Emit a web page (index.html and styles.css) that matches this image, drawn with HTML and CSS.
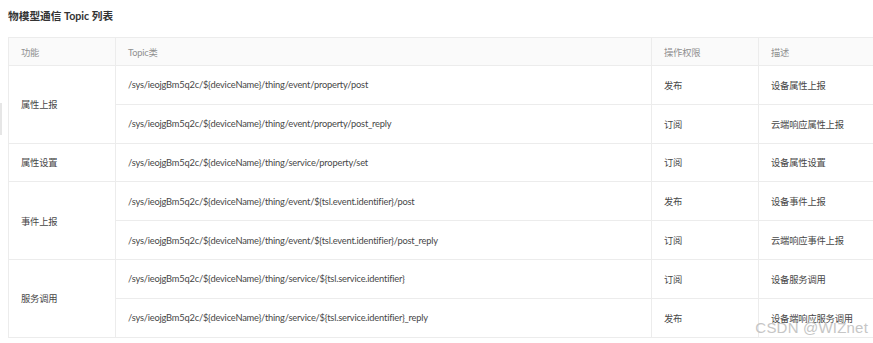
FILE: index.html
```html
<!DOCTYPE html>
<html lang="zh-CN">
<head>
<meta charset="utf-8">
<title>物模型通信 Topic 列表</title>
<link rel="stylesheet" href="styles.css">
</head>
<body>
<div class="page">
  <div class="side-mark"></div>
  <h2 class="title">物模型通信 Topic 列表</h2>
  <table class="topic-table">
    <colgroup>
      <col class="c1"><col class="c2"><col class="c3"><col class="c4">
    </colgroup>
    <thead>
      <tr><th>功能</th><th>Topic类</th><th>操作权限</th><th>描述</th></tr>
    </thead>
    <tbody>
      <tr><td rowspan="2">属性上报</td><td>/sys/ieojgBm5q2c/${deviceName}/thing/event/property/post</td><td>发布</td><td>设备属性上报</td></tr>
      <tr><td>/sys/ieojgBm5q2c/${deviceName}/thing/event/property/post_reply</td><td>订阅</td><td>云端响应属性上报</td></tr>
      <tr><td>属性设置</td><td>/sys/ieojgBm5q2c/${deviceName}/thing/service/property/set</td><td>订阅</td><td>设备属性设置</td></tr>
      <tr><td rowspan="2">事件上报</td><td>/sys/ieojgBm5q2c/${deviceName}/thing/event/${tsl.event.identifier}/post</td><td>发布</td><td>设备事件上报</td></tr>
      <tr><td>/sys/ieojgBm5q2c/${deviceName}/thing/event/${tsl.event.identifier}/post_reply</td><td>订阅</td><td>云端响应事件上报</td></tr>
      <tr><td rowspan="2">服务调用</td><td>/sys/ieojgBm5q2c/${deviceName}/thing/service/${tsl.service.identifier}</td><td>订阅</td><td>设备服务调用</td></tr>
      <tr><td>/sys/ieojgBm5q2c/${deviceName}/thing/service/${tsl.service.identifier}_reply</td><td>发布</td><td>设备端响应服务调用</td></tr>
    </tbody>
  </table>
  <div class="watermark">CSDN @WIZnet</div>
</div>
</body>
</html>
```
FILE: styles.css
```css
html, body {
  margin: 0;
  padding: 0;
  background: #ffffff;
  overflow: hidden;
}
.page {
  position: relative;
  width: 873px;
  height: 343px;
  overflow: hidden;
  padding: 7px 0 0 8px;
  box-sizing: border-box;
  font-family: Lato, "Noto Sans CJK SC", sans-serif;
}
.side-mark {
  position: absolute;
  left: 0;
  top: 103px;
  width: 2px;
  height: 32px;
  background: #e6e6e6;
}
.title {
  margin: 0 0 13px 0;
  height: 17px;
  line-height: 17px;
  font-size: 10.7px;
  font-weight: 700;
  color: #333333;
}
.topic-table {
  border-collapse: collapse;
  table-layout: fixed;
  width: 900px;
  font-size: 9.3px;
  letter-spacing: -0.2px;
  color: #474747;
}
.c1 { width: 107px; }
.c2 { width: 536px; }
.c3 { width: 107px; }
.c4 { width: 150px; }
.topic-table th,
.topic-table td {
  border: 1px solid #ececec;
  padding: 0 12px;
  text-align: left;
  vertical-align: middle;
  white-space: nowrap;
  font-weight: 400;
}
.topic-table th {
  height: 27px;
  background: #fafafa;
  color: #909090;
}
.topic-table td {
  height: 37.8px;
}
.watermark {
  position: absolute;
  right: 5px;
  bottom: 7px;
  font-family: "Liberation Sans", Arial, sans-serif;
  font-size: 15px;
  color: #c6c6c6;
  letter-spacing: 0.2px;
}
```
